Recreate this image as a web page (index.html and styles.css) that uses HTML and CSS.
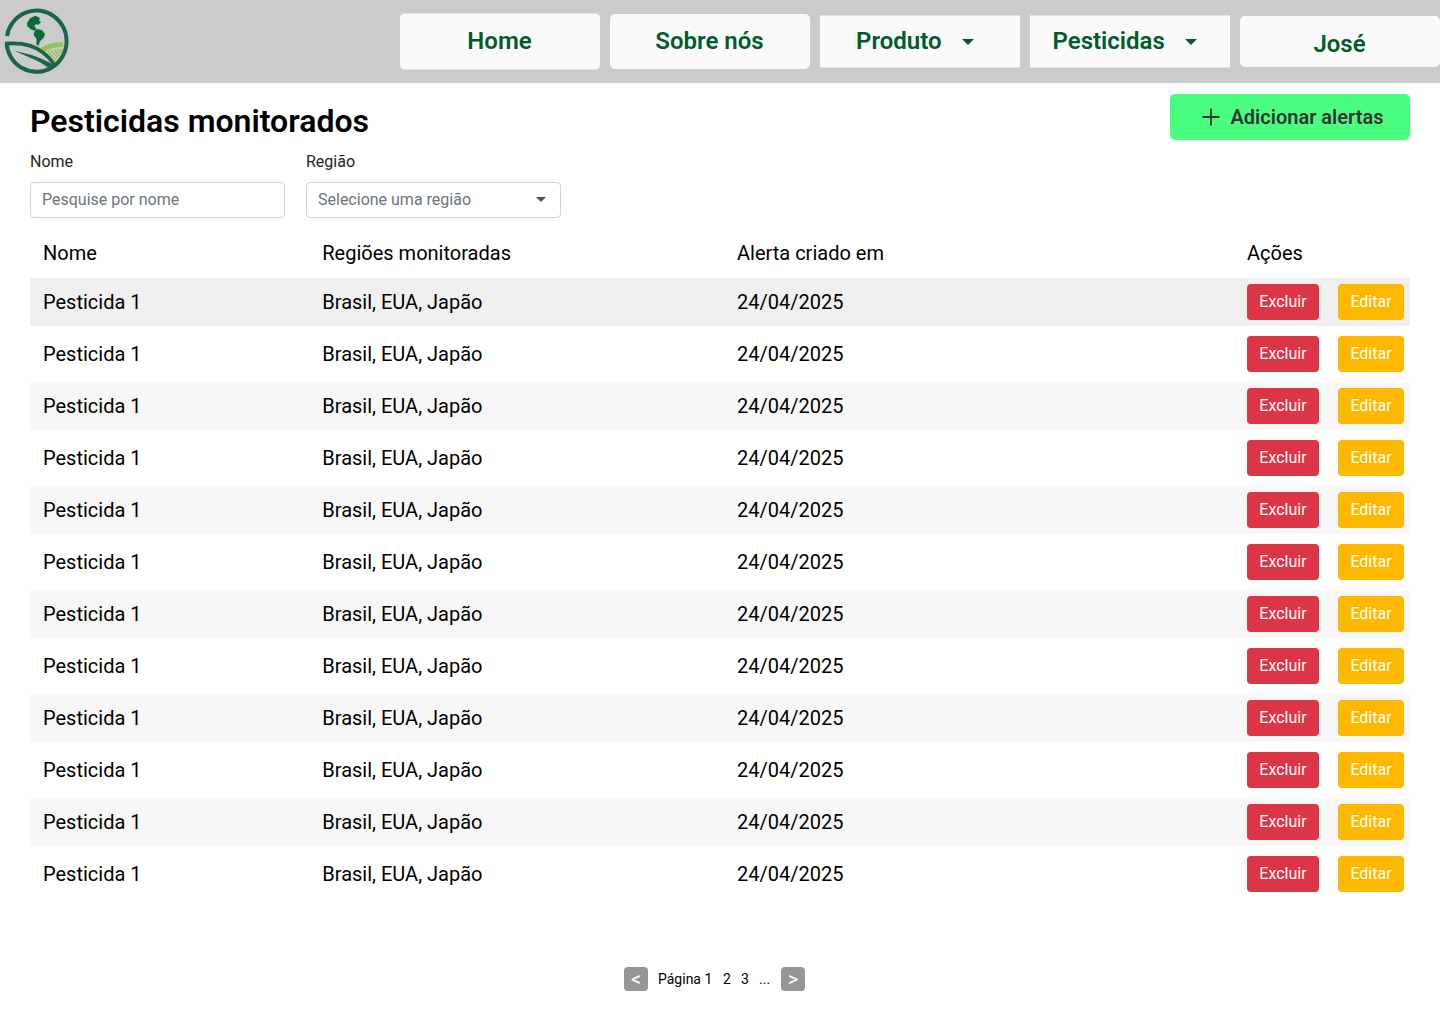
FILE: index.html
```html
<!DOCTYPE html>
<html lang="pt-BR">
<head>
<meta charset="utf-8">
<title>Pesticidas monitorados</title>
<link rel="stylesheet" href="styles.css">
</head>
<body>
<header class="topbar">
  <svg class="logo" viewBox="0 0 252 252" fill="none">
    <path d="M115 148Q148 126 188 126L191 140Q155 140 129 158Z" fill="#95c356"/>
    <path d="M134 158L162 190M143 154L170 184M152 151L177 177M162 149L182 171M172 147L187 164M181 146L190 156" stroke="#95c356" stroke-width="4.5"/>
    <path d="M21 108A90 92 0 1 1 20 131" stroke="#1b6545" stroke-width="12"/>
    <path d="M15 131C62 127 104 137 128 157Q148 172 162 192" stroke="#1b6545" stroke-width="11"/>
    <path d="M43 152L92 164Q132 177 158 193L146 203Q114 182 92 174Z" fill="#1b6545"/>
    <path d="M81 69L91 54L106 47L120 54L117 61L123 67L114 75L108 72L103 79L110 87L104 92L92 88L82 79ZM104 94L112 87L126 91L135 102L131 113L120 124L115 138L109 132L110 118L101 104Z" fill="#066a39"/>
  </svg>
  <nav class="nav">
    <a class="nav-item home">Home</a>
    <a class="nav-item about">Sobre nós</a>
    <a class="nav-item drop product">Produto <i class="caret"></i></a>
    <a class="nav-item drop pest">Pesticidas <i class="caret"></i></a>
    <a class="nav-item user">José</a>
  </nav>
</header>
<main class="page">
  <div class="heading">
    <h1 class="title">Pesticidas monitorados</h1>
    <button class="add"><svg class="plus" viewBox="0 0 18 18"><path d="M9 .5v17M.5 9h17" stroke="#333" stroke-width="1.8"/></svg>Adicionar alertas</button>
  </div>
  <div class="filters">
    <div class="field"><span class="label">Nome</span><div class="control">Pesquise por nome</div></div>
    <div class="field"><span class="label">Região</span><div class="control">Selecione uma região<i class="caret"></i></div></div>
  </div>
  <div class="table">
    <div class="row head"><span>Nome</span><span>Regiões monitoradas</span><span>Alerta criado em</span><span>Ações</span></div>
    <div class="row"><span>Pesticida 1</span><span>Brasil, EUA, Japão</span><span>24/04/2025</span><div class="actions"><button class="btn del">Excluir</button><button class="btn edit">Editar</button></div></div>
    <div class="row"><span>Pesticida 1</span><span>Brasil, EUA, Japão</span><span>24/04/2025</span><div class="actions"><button class="btn del">Excluir</button><button class="btn edit">Editar</button></div></div>
    <div class="row"><span>Pesticida 1</span><span>Brasil, EUA, Japão</span><span>24/04/2025</span><div class="actions"><button class="btn del">Excluir</button><button class="btn edit">Editar</button></div></div>
    <div class="row"><span>Pesticida 1</span><span>Brasil, EUA, Japão</span><span>24/04/2025</span><div class="actions"><button class="btn del">Excluir</button><button class="btn edit">Editar</button></div></div>
    <div class="row"><span>Pesticida 1</span><span>Brasil, EUA, Japão</span><span>24/04/2025</span><div class="actions"><button class="btn del">Excluir</button><button class="btn edit">Editar</button></div></div>
    <div class="row"><span>Pesticida 1</span><span>Brasil, EUA, Japão</span><span>24/04/2025</span><div class="actions"><button class="btn del">Excluir</button><button class="btn edit">Editar</button></div></div>
    <div class="row"><span>Pesticida 1</span><span>Brasil, EUA, Japão</span><span>24/04/2025</span><div class="actions"><button class="btn del">Excluir</button><button class="btn edit">Editar</button></div></div>
    <div class="row"><span>Pesticida 1</span><span>Brasil, EUA, Japão</span><span>24/04/2025</span><div class="actions"><button class="btn del">Excluir</button><button class="btn edit">Editar</button></div></div>
    <div class="row"><span>Pesticida 1</span><span>Brasil, EUA, Japão</span><span>24/04/2025</span><div class="actions"><button class="btn del">Excluir</button><button class="btn edit">Editar</button></div></div>
    <div class="row"><span>Pesticida 1</span><span>Brasil, EUA, Japão</span><span>24/04/2025</span><div class="actions"><button class="btn del">Excluir</button><button class="btn edit">Editar</button></div></div>
    <div class="row"><span>Pesticida 1</span><span>Brasil, EUA, Japão</span><span>24/04/2025</span><div class="actions"><button class="btn del">Excluir</button><button class="btn edit">Editar</button></div></div>
    <div class="row"><span>Pesticida 1</span><span>Brasil, EUA, Japão</span><span>24/04/2025</span><div class="actions"><button class="btn del">Excluir</button><button class="btn edit">Editar</button></div></div>
  </div>
  <div class="pager"><button class="step">&lt;</button><span class="current">Página 1</span><span class="two">2</span><span class="three">3</span><span class="more">...</span><button class="step">&gt;</button></div>
</main>
</body>
</html>
```
FILE: styles.css
```css
* { box-sizing: border-box; }
body { margin: 0; background: #fff; color: #000; font-family: Roboto, sans-serif; height: 1024px; overflow: hidden; }
button { border: 0; padding: 0; font-family: inherit; }
.topbar { height: 83px; background: #cbcbcb; display: flex; justify-content: space-between; }
.logo { width: 84px; height: 84px; }
.nav { display: flex; gap: 10px; align-items: center; }
.nav-item { width: 200px; display: flex; align-items: center; justify-content: center; background: #fafafa; color: #005c29; font-size: 24px; font-weight: 600; line-height: 28px; border-radius: 5px; padding-right: 1px; }
.home { height: 57px; border: solid #e4e4e4; border-width: 1px 0; padding-bottom: 1px; }
.about { height: 55px; padding-bottom: 1px; }
.drop { height: 53px; border-radius: 0; border: solid #e4e4e4; border-width: 1px 0; justify-content: flex-start; padding-bottom: 1px; }
.product { padding-left: 36px; }
.pest { padding-left: 22.5px; }
.user { height: 51px; padding-top: 5px; }
.caret { border: solid transparent; border-width: 6.5px 6.5px 0; border-top-color: currentColor; margin: 1px 0 0 20px; }
.pest .caret { margin-left: 20.5px; }
.page { padding: 11px 30px 0; }
.heading { display: flex; justify-content: space-between; height: 58px; }
.title { margin: 8px 0 0; font-size: 32px; line-height: 38px; font-weight: 600; }
.add { width: 240px; height: 46px; display: flex; align-items: center; background: #4aff80; border-radius: 5px; color: #333; font-size: 20px; font-weight: 600; padding-left: 32px; }
.plus { width: 18px; height: 18px; margin-right: 10.5px; }
.filters { display: flex; gap: 21px; height: 76px; }
.field { width: 255px; }
.label { display: block; font-size: 16px; line-height: 19px; color: #212529; margin-bottom: 11px; }
.control { height: 36px; border: 1px solid #ced4da; border-radius: 4px; padding: 0 14px 2px 11px; display: flex; align-items: center; font-size: 16px; color: #6c757d; }
.control .caret { margin: 0 0 0 auto; border-width: 5px 5px 0; border-top-color: #495057; }
.table { display: flex; flex-direction: column; gap: 4px; }
.row { height: 48px; display: grid; grid-template-columns: 279.3px 414.7px 510px 157px; align-items: center; padding-left: 13px; font-size: 20px; }
.head { height: 46px; padding-top: 4px; }
.row:nth-child(even) { background: #f7f7f7; }
.row:nth-child(2) { background: #f0f0f0; }
.actions { display: flex; justify-content: space-between; }
.btn { height: 36px; border-radius: 4px; color: #fff; font-size: 16px; padding-bottom: 1px; }
.del { width: 72px; background: #dc3545; }
.edit { width: 66px; background: #ffb800; }
.pager { display: flex; align-items: center; margin: 69px 0 0 594px; font-size: 14px; }
.step { width: 24px; height: 24px; border-radius: 4px; background: #969696; color: #fff; font-size: 20px; line-height: 24px; }
.current { width: 65px; padding-left: 10px; margin-right: 10px; }
.two, .three { width: 18px; }
.more { width: 22px; }
```
